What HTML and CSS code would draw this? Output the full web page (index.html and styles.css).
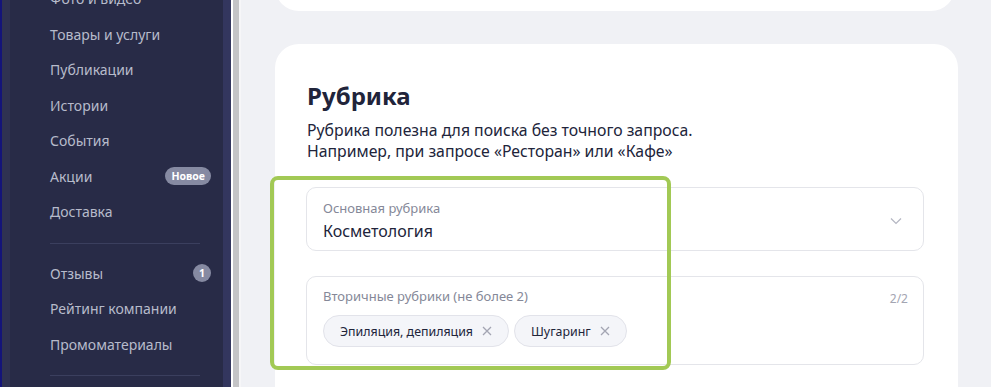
FILE: index.html
```html
<!DOCTYPE html>
<html>
<head>
    <link rel="stylesheet" href="styles.css">
</head>
<body>
    <div class="sidebar">
        <div class="sidebar-inner">
            <ul class="menu">
                <li class="menu-item">Фото и видео</li>
                <li class="menu-item">Товары и услуги</li>
                <li class="menu-item">Публикации</li>
                <li class="menu-item">Истории</li>
                <li class="menu-item">События</li>
                <li class="menu-item">Акции <span class="badge">Новое</span></li>
                <li class="menu-item">Доставка</li>
            </ul>
            <div class="divider"></div>
            <ul class="menu">
                <li class="menu-item">Отзывы <span class="counter">1</span></li>
                <li class="menu-item">Рейтинг компании</li>
                <li class="menu-item">Промоматериалы</li>
            </ul>
            <div class="divider"></div>
        </div>
        <div class="sidebar-edge"></div>
    </div>
    <div class="scrollbar"></div>

    <div class="main">
        <div class="card card-top"></div>
        <div class="card">
            <h2 class="card-title">Рубрика</h2>
            <p class="card-text">Рубрика полезна для поиска без точного запроса.<br>Например, при запросе «Ресторан» или «Кафе»</p>

            <div class="fields">
                <div class="field">
                    <div class="field-label">Основная рубрика</div>
                    <div class="field-value">Косметология</div>
                    <svg class="chevron" width="12" height="8" viewBox="0 0 12 8">
                        <path d="M1 1.5 L6 6.5 L11 1.5" fill="none" stroke="#b4b6c2" stroke-width="1.2"/>
                    </svg>
                </div>
                <div class="field field-multi">
                    <div class="field-label">Вторичные рубрики (не более 2)</div>
                    <span class="field-count">2/2</span>
                    <div class="chips">
                        <span class="chip">Эпиляция, депиляция
                            <svg class="chip-close" width="10" height="10" viewBox="0 0 10 10">
                                <path d="M1 1 L9 9 M9 1 L1 9" stroke="#a3a5b2" stroke-width="1.3"/>
                            </svg>
                        </span>
                        <span class="chip">Шугаринг
                            <svg class="chip-close" width="10" height="10" viewBox="0 0 10 10">
                                <path d="M1 1 L9 9 M9 1 L1 9" stroke="#a3a5b2" stroke-width="1.3"/>
                            </svg>
                        </span>
                    </div>
                </div>
                <div class="highlight"></div>
            </div>
        </div>
    </div>
</body>
</html>
```

FILE: styles.css
```css
body {
    font-family: "Noto Sans", "Open Sans", sans-serif;
    margin: 0;
    height: 387px;
    overflow: hidden;
    display: flex;
    background: #f0f1f5;
    color: #21243a;
}
.sidebar {
    display: flex;
    width: 231px;
    flex-shrink: 0;
    background: #282b47;
    border-left: 2px solid #14147a;
    box-sizing: border-box;
}
.sidebar-inner {
    flex: 1;
    border-left: 8px solid #2f3252;
    padding: 0 0 0 40px;
    margin-top: -19px;
}
.sidebar-edge {
    width: 8px;
    background: #33365e;
}
.scrollbar {
    width: 10px;
    flex-shrink: 0;
    background: #c4c4c6;
    border-left: 2px solid #fff;
    border-right: 2px solid #f6f6f8;
    box-sizing: border-box;
}
.menu {
    list-style: none;
    margin: 0;
    padding: 0;
    width: 161px;
}
.menu-item {
    height: 35.5px;
    display: flex;
    align-items: center;
    justify-content: space-between;
    font-size: 14px;
    color: #b7bbcb;
}
.badge {
    background: #868aa2;
    color: #fff;
    font-size: 10.5px;
    font-weight: bold;
    border-radius: 9px;
    padding: 0 6px;
    height: 18px;
    line-height: 18px;
}
.counter {
    background: #868aa2;
    color: #fff;
    font-size: 10.5px;
    font-weight: bold;
    border-radius: 50%;
    width: 18px;
    height: 18px;
    line-height: 18px;
    text-align: center;
}
.divider {
    height: 1px;
    background: #3b3f5e;
    width: 150px;
    margin: 13px 0 12px;
}
.main {
    flex: 1;
    padding: 0 33px 0 34px;
    margin-top: -60px;
}
.card {
    background: #fff;
    border-radius: 24px;
    padding: 36px 34px 30px 32px;
    margin-bottom: 33px;
    position: relative;
}
.card-top {
    height: 71px;
    padding: 0;
    margin-right: 3px;
}
.card-title {
    font-size: 24px;
    font-weight: bold;
    margin: 0 0 8px;
    line-height: 32px;
}
.card-text {
    font-size: 15.8px;
    line-height: 21px;
    margin: 0 0 25px;
}
.fields {
    position: relative;
    margin-left: -1px;
}
.field {
    position: relative;
    border: 1px solid #e4e5ea;
    border-radius: 10px;
    height: 64px;
    box-sizing: border-box;
    padding: 11px 16px;
    margin-bottom: 25px;
}
.field-label {
    font-size: 13px;
    color: #858898;
    line-height: 18px;
}
.field-value {
    font-size: 16px;
    line-height: 24px;
    margin-top: 2px;
    color: #21243a;
}
.chevron {
    position: absolute;
    right: 21px;
    top: 29px;
}
.field-multi {
    height: 89px;
    padding-top: 10px;
}
.field-count {
    position: absolute;
    right: 15px;
    top: 13px;
    font-size: 12px;
    color: #a3a5b2;
}
.chips {
    display: flex;
    gap: 5px;
    margin-top: 10px;
}
.chip {
    display: flex;
    align-items: center;
    gap: 9px;
    height: 32px;
    box-sizing: border-box;
    padding: 0 16px 0 16px;
    background: #f4f5f9;
    border: 1px solid #e2e3ea;
    border-radius: 16px;
    font-size: 12.4px;
    color: #21243a;
}
.highlight {
    position: absolute;
    left: -36px;
    top: -11px;
    width: 401px;
    height: 194px;
    box-sizing: border-box;
    border: 4px solid #a2c955;
    border-radius: 8px;
}
```
